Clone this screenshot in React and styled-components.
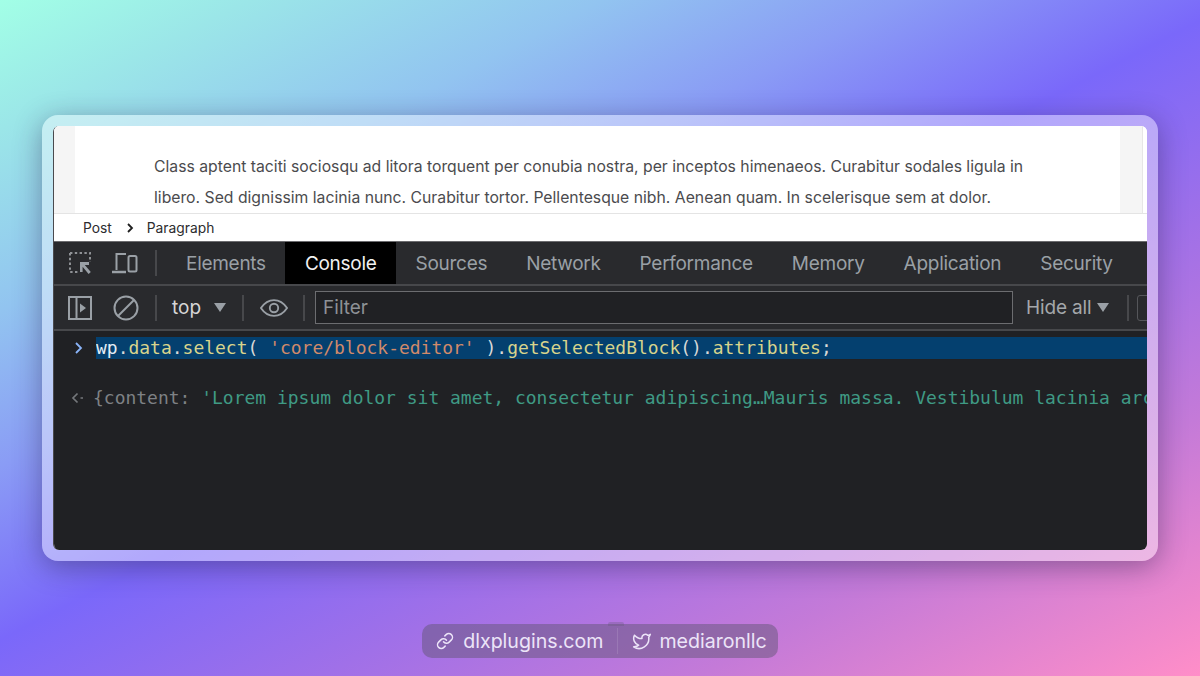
import React from 'react';
import styled, { createGlobalStyle } from 'styled-components';

const GlobalStyle = createGlobalStyle`
  html, body {
    margin: 0;
    padding: 0;
  }
  body {
    font-family: Inter, "Liberation Sans", sans-serif;
  }
`;

const Stage = styled.div`
  width: 1200px;
  height: 676px;
  overflow: hidden;
  box-sizing: border-box;
  padding-top: 115px;
  display: flex;
  flex-direction: column;
  align-items: center;
  background: linear-gradient(152.7deg, #a2ffe6 0%, #9be6e8 10%, #92c4f0 24%, #8a9cf5 36%, #7a68fa 49.4%, #a070e8 65%, #c47ad8 80%, #ff8ec8 100%);
`;

const GlassFrame = styled.div`
  width: 1116px;
  height: 446px;
  box-sizing: border-box;
  padding: 11px;
  border-radius: 16px;
  background: rgba(255, 255, 255, 0.42);
  box-shadow: 0 6px 28px rgba(40, 30, 70, 0.42);
`;

const Window = styled.div`
  height: 100%;
  display: flex;
  flex-direction: column;
  border-radius: 6px;
  overflow: hidden;
  background: #fff;
  border-left: 1px solid #4a4a4e;
`;

const Editor = styled.div`
  height: 87px;
  flex: none;
  display: flex;
  background: #fff;
`;

const Gutter = styled.div`
  flex: none;
  width: ${props => props.$width}px;
  background: #f5f5f5;
  ${props => props.$right && 'border-right: 1px solid #e6e6e6; margin-right: 4px;'}
`;

const Copy = styled.p`
  flex: 1;
  margin: 0;
  padding: 25px 0 0 79px;
  font-size: 15.75px;
  line-height: 31px;
  color: #4b4b4e;
  white-space: nowrap;
  overflow: hidden;
`;

const Crumbs = styled.div`
  height: 28px;
  flex: none;
  box-sizing: border-box;
  border-top: 1px solid #e4e4e4;
  display: flex;
  align-items: center;
  padding-left: 29px;
  font-size: 13.8px;
  color: #2c2c2e;
  background: #fff;
`;

const CrumbArrow = styled.svg`
  width: 8px;
  height: 10px;
  margin: 0 13px 0 14px;
`;

const Devtools = styled.div`
  flex: 1;
  min-height: 0;
  display: flex;
  flex-direction: column;
  background: #202124;
  border-top: 1px solid #6b6b6e;
`;

const Toolbar = styled.div`
  flex: none;
  height: ${props => props.$height}px;
  box-sizing: border-box;
  display: flex;
  align-items: center;
  background: #292a2d;
  border-bottom: 2px solid #47484b;
  overflow: hidden;
  white-space: nowrap;
`;

const IconButton = styled.svg`
  flex: none;
  display: block;
  margin-left: ${props => props.$left || 0}px;
`;

const Divider = styled.span`
  flex: none;
  width: 2px;
  height: 26px;
  background: #47484b;
  margin-left: ${props => props.$left}px;
`;

const Tabs = styled.div`
  flex: none;
  height: 100%;
  display: flex;
  margin-left: 9.5px;
`;

const Tab = styled.div`
  flex: none;
  height: 100%;
  display: flex;
  align-items: center;
  box-sizing: border-box;
  padding: 0 19.5px;
  font-size: 19px;
  letter-spacing: -0.28px;
  color: ${props => (props.$active ? '#f1f1f1' : '#9aa0a6')};
  background: ${props => (props.$active ? '#000' : 'transparent')};
`;

const TopSelect = styled.span`
  flex: none;
  margin-left: 15px;
  font-size: 19px;
  color: #d6d6d6;
`;

const Caret = styled.span`
  flex: none;
  width: 0;
  height: 0;
  margin-left: ${props => props.$left}px;
  border-left: 6.5px solid transparent;
  border-right: 6.5px solid transparent;
  border-top: 9px solid #9aa0a6;
`;

const FilterBox = styled.div`
  flex: none;
  width: 698px;
  height: 33px;
  margin-left: 10px;
  box-sizing: border-box;
  border: 1px solid #6c6d70;
  background: #202124;
  display: flex;
  align-items: center;
  padding-left: 7px;
  font-size: 19px;
  color: #8d9196;
`;

const HideAll = styled.span`
  flex: none;
  margin-left: 13px;
  font-size: 19px;
  letter-spacing: -0.15px;
  color: #a4a7ab;
`;

const GearBox = styled.span`
  flex: none;
  width: 20px;
  height: 26px;
  margin-left: 8px;
  box-sizing: border-box;
  border: 1px solid #55565a;
  border-radius: 3px;
`;

const Console = styled.div`
  flex: 1;
  min-height: 0;
  padding-top: 6px;
  font-family: "DejaVu Sans Mono", monospace;
  font-size: 17.98px;
  line-height: 22px;
  white-space: nowrap;
  overflow: hidden;
`;

const ConsoleRow = styled.div`
  display: flex;
  align-items: center;
  height: ${props => props.$height}px;
  margin-top: ${props => props.$top || 0}px;
`;

const Chevron = styled.svg`
  flex: none;
  width: 10px;
  height: 14px;
  margin-left: 20px;
  margin-right: 12px;
`;

const ReturnArrow = styled.svg`
  flex: none;
  width: 14px;
  height: 12px;
  margin-left: 17px;
  margin-right: 8px;
`;

const Selected = styled.div`
  flex: 1;
  height: 100%;
  background: #04406f;
  color: #d8d8d8;
  line-height: 22px;
  overflow: hidden;
`;

const Token = styled.span`
  color: ${props => props.$color};
`;

const Output = styled.div`
  flex: 1;
  min-width: 0;
  overflow: hidden;
  color: #7e8185;
`;

const Pill = styled.div`
  margin-top: 63px;
  height: 34px;
  box-sizing: border-box;
  padding: 0 11px 0 14px;
  display: flex;
  align-items: center;
  border-radius: 10px;
  background: rgba(100, 85, 120, 0.5);
  color: #ece4f8;
  font-size: 19.6px;
  position: relative;
`;

const PillNotch = styled.span`
  position: absolute;
  left: 186px;
  top: -2px;
  width: 16px;
  height: 4px;
  border-radius: 2px 2px 0 0;
  background: rgba(100, 85, 120, 0.3);
`;

const PillLink = styled.span`
  display: flex;
  align-items: center;
  gap: ${props => props.$gap}px;
`;

const PillDivider = styled.span`
  width: 1px;
  height: 26px;
  margin: 0 14px;
  background: rgba(255, 255, 255, 0.12);
`;

const InspectIcon = () => (
  <IconButton $left={14} width="26" height="26" viewBox="0 0 26 26" fill="none">
    <path d="M2 3h20v9M2 3v19h9" stroke="#8f9296" strokeWidth="2" strokeDasharray="2.4 2.4" />
    <path d="M12 12h9v3h-4.200l6 7-2.200 2-6-7.200V22h-2.600z" fill="#9aa0a6" />
  </IconButton>
);

const DeviceIcon = () => (
  <IconButton $left={17} width="27" height="24" viewBox="0 0 27 24" fill="none" stroke="#9aa0a6" strokeWidth="2">
    <path d="M15 3H5.500v16" />
    <path d="M1 21h14" strokeWidth="2.500" />
    <rect x="17.500" y="5" width="8" height="15.500" rx="1.500" />
  </IconButton>
);

const SidebarIcon = () => (
  <IconButton $left={14} width="24" height="24" viewBox="0 0 24 24" fill="none">
    <rect x="1" y="1" width="22" height="22" stroke="#9aa0a6" strokeWidth="2" />
    <path d="M8.500 1v22" stroke="#9aa0a6" strokeWidth="2" />
    <path d="M12 7.500l6 4.500-6 4.500z" fill="#9aa0a6" />
  </IconButton>
);

const ClearIcon = () => (
  <IconButton $left={21} width="26" height="26" viewBox="0 0 26 26" fill="none" stroke="#9aa0a6" strokeWidth="2">
    <circle cx="13" cy="13" r="11.500" />
    <path d="M5 21L21 5" />
  </IconButton>
);

const EyeIcon = () => (
  <IconButton $left={16} width="28" height="20" viewBox="0 0 30 20" fill="none" stroke="#9aa0a6" strokeWidth="2">
    <path d="M1 10C5 4 10 1.500 15 1.500S25 4 29 10c-4 6-9 8.500-14 8.500S5 16 1 10z" />
    <circle cx="15" cy="10" r="4.500" />
  </IconButton>
);

const LinkIcon = () => (
  <svg width="18" height="18" viewBox="0 0 24 24" fill="none" stroke="#ece4f8" strokeWidth="2" strokeLinecap="round" strokeLinejoin="round">
    <path d="M10 13a5 5 0 0 0 7.540.540l3-3a5 5 0 0 0-7.070-7.070l-1.720 1.710" />
    <path d="M14 11a5 5 0 0 0-7.540-.540l-3 3a5 5 0 0 0 7.070 7.070l1.710-1.710" />
  </svg>
);

const TwitterIcon = () => (
  <svg width="20" height="20" viewBox="0 0 24 24" fill="none" stroke="#ece4f8" strokeWidth="1.800" strokeLinecap="round" strokeLinejoin="round">
    <path d="M22 4s-.700 2.100-2 3.400c1.600 10-9.400 17.300-18 11.600 2.200.100 4.400-.600 6-2C3 15.500.500 9.600 3 5c2.200 2.600 5.600 4.100 9 4-.900-4.200 4-6.600 7-3.800 1.100 0 3-1.200 3-1.200z" />
  </svg>
);

const tabs = ['Elements', 'Console', 'Sources', 'Network', 'Performance', 'Memory', 'Application', 'Security'];

export default function App() {
  return (
    <>
      <GlobalStyle />
      <Stage>
        <GlassFrame>
          <Window>
            <Editor>
              <Gutter $width={21} />
              <Copy>
                Class aptent taciti sociosqu ad litora torquent per conubia nostra, per inceptos himenaeos. Curabitur sodales ligula in
                <br />
                libero. Sed dignissim lacinia nunc. Curabitur tortor. Pellentesque nibh. Aenean quam. In scelerisque sem at dolor.
              </Copy>
              <Gutter $width={22} $right />
            </Editor>
            <Crumbs>
              Post
              <CrumbArrow viewBox="0 0 8 10" fill="none" stroke="#1e1e1e" strokeWidth="1.800">
                <path d="M2 1l4 4-4 4" />
              </CrumbArrow>
              Paragraph
            </Crumbs>
            <Devtools>
              <Toolbar $height={44}>
                <InspectIcon />
                <DeviceIcon />
                <Divider $left={17} />
                <Tabs>
                  {tabs.map(tab => (
                    <Tab key={tab} $active={tab === 'Console'}>{tab}</Tab>
                  ))}
                </Tabs>
              </Toolbar>
              <Toolbar $height={45}>
                <SidebarIcon />
                <ClearIcon />
                <Divider $left={16} />
                <TopSelect>top</TopSelect>
                <Caret $left={13} />
                <Divider $left={16} />
                <EyeIcon />
                <Divider $left={15} />
                <FilterBox>Filter</FilterBox>
                <HideAll>Hide all</HideAll>
                <Caret $left={5} />
                <Divider $left={18} />
                <GearBox />
              </Toolbar>
              <Console>
                <ConsoleRow $height={22}>
                  <Chevron viewBox="0 0 10 14" fill="none" stroke="#8ab4f8" strokeWidth="1.800">
                    <path d="M2 2l5 5-5 5" />
                  </Chevron>
                  <Selected>
                    <Token $color="#e2edf5">wp</Token>.<Token $color="#d8d48c">data</Token>.<Token $color="#d8d48c">select</Token>( <Token $color="#d08a6a">'core/block-editor'</Token> ).<Token $color="#d8d48c">getSelectedBlock</Token>().<Token $color="#d8d48c">attributes</Token>;
                  </Selected>
                </ConsoleRow>
                <ConsoleRow $height={22} $top={28}>
                  <ReturnArrow viewBox="0 0 14 12" fill="none" stroke="#74777b" strokeWidth="1.700">
                    <path d="M6.500 1.500L2 6l4.500 4.500M9.500 6h2.500" />
                  </ReturnArrow>
                  <Output>
                    {'{'}content: <Token $color="#3f9a84">'Lorem ipsum dolor sit amet, consectetur adipiscing…Mauris massa. Vestibulum lacinia arcu eget nulla.'</Token>
                  </Output>
                </ConsoleRow>
              </Console>
            </Devtools>
          </Window>
        </GlassFrame>
        <Pill>
          <PillNotch />
          <PillLink $gap={9}><LinkIcon />dlxplugins.com</PillLink>
          <PillDivider />
          <PillLink $gap={7}><TwitterIcon />mediaronllc</PillLink>
        </Pill>
      </Stage>
    </>
  );
}
